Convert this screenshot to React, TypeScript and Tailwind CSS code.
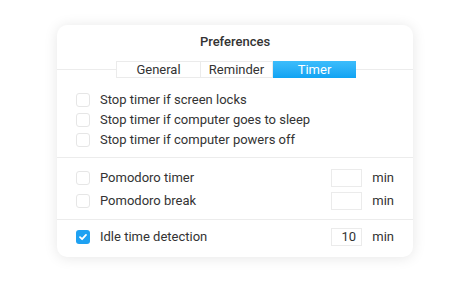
export default function App() {
  const font = { fontFamily: 'Roboto, "Noto Sans", sans-serif' };
  return (
    <div
      className="w-[470px] h-[283px] bg-white pt-[25px] pl-[57px] font-['Roboto',sans-serif] text-[#333333]"
      style={font}
    >
      <div className="w-[356px] h-[232px] rounded-[10px] bg-white shadow-[0_1px_14px_rgba(0,0,0,0.1)] flex flex-col overflow-hidden">
        {/* Title */}
        <div className="h-[36px] pt-[9px] text-center text-[13px] leading-[16px] font-medium text-[#333]">
          Preferences
        </div>

        {/* Tabs */}
        <div className="h-[17px] flex items-center">
          <div className="w-[59px] h-px bg-[#ececec]" />
          <div className="flex h-[17px] text-[13px] leading-[16px]">
            <div className="w-[85px] border border-[#ebebeb] bg-white text-center text-[#333]">General</div>
            <div className="w-[72px] border-y border-r border-[#ebebeb] bg-white text-center text-[#333]">Reminder</div>
            <div className="w-[83px] bg-gradient-to-b from-[#3cbdfb] to-[#0ea3f3] text-center text-white leading-[17px]">Timer</div>
          </div>
          <div className="flex-1 h-px bg-[#ececec]" />
        </div>

        {/* Section 1 */}
        <div className="pt-[12px] pb-[7px] border-b border-[#ececec]">
          <Row label="Stop timer if screen locks" />
          <Row label="Stop timer if computer goes to sleep" />
          <Row label="Stop timer if computer powers off" />
        </div>

        {/* Section 2 */}
        <div className="pt-[8px] pb-[7px] border-b border-[#ececec]">
          <InputRow label="Pomodoro timer" value="" />
          <InputRow label="Pomodoro break" value="" />
        </div>

        {/* Section 3 */}
        <div className="pt-[5px]">
          <InputRow label="Idle time detection" value="10" checked />
        </div>
      </div>
    </div>
  );
}

function Box({ checked }: { checked?: boolean }) {
  if (checked) {
    return (
      <div className="w-[14px] h-[14px] rounded-[3px] bg-[#1ea1f2] flex items-center justify-center">
        <svg width="10" height="10" viewBox="0 0 10 10">
          <path d="M2 5.2 L4.1 7.2 L8 2.9" fill="none" stroke="white" strokeWidth="1.8" strokeLinecap="round" strokeLinejoin="round" />
        </svg>
      </div>
    );
  }
  return <div className="w-[14px] h-[14px] rounded-[3px] border border-[#e6e6e6] bg-white" />;
}

function Row({ label }: { label: string }) {
  return (
    <div className="h-[20px] flex items-center pl-[19px] gap-[10px] text-[13px]">
      <Box />
      <span>{label}</span>
    </div>
  );
}

function InputRow({ label, value, checked }: { label: string; value: string; checked?: boolean }) {
  return (
    <div className="h-[23px] flex items-center pl-[19px] pr-[19px] gap-[10px] text-[13px]">
      <Box checked={checked} />
      <span className="flex-1">{label}</span>
      <div className="w-[31px] h-[18px] border border-[#ebebeb] bg-white text-right pr-[5px] leading-[16px]">{value}</div>
      <span className="ml-[-1px] w-[23px] text-right">min</span>
    </div>
  );
}
